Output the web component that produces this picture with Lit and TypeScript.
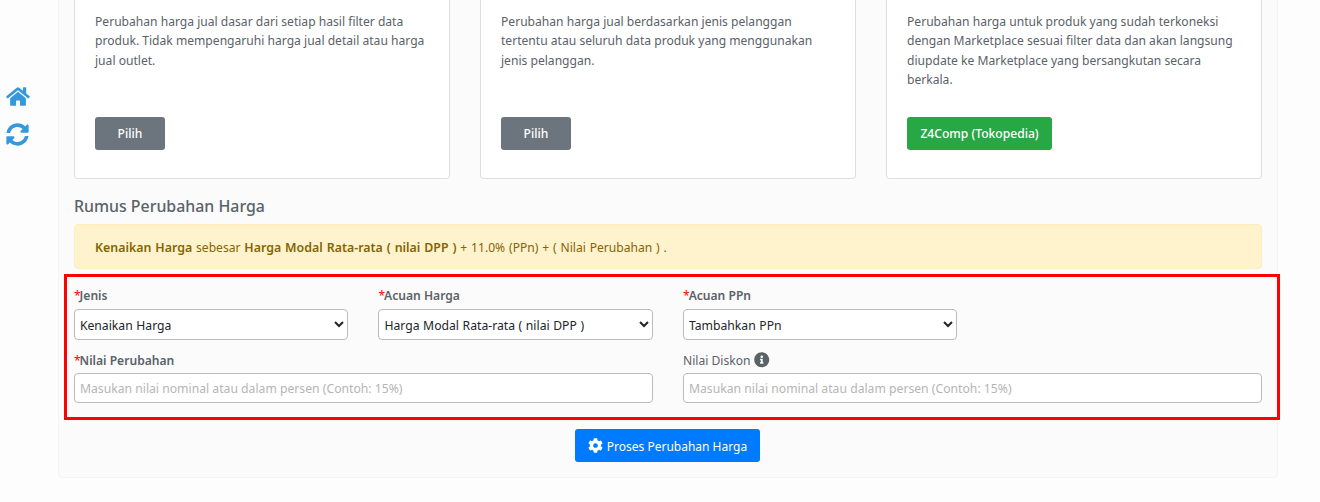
import { LitElement, html, css, svg } from "lit";
import { customElement } from "lit/decorators.js";

const HOME = "M280.37 148.26L96 300.11V464a16 16 0 0 0 16 16l112.06-.29a16 16 0 0 0 15.92-16V368a16 16 0 0 1 16-16h64a16 16 0 0 1 16 16v95.64a16 16 0 0 0 16 16.05L464 480a16 16 0 0 0 16-16V300L295.67 148.26a12.19 12.19 0 0 0-15.3 0zM571.6 251.47L488 182.56V44.05a12 12 0 0 0-12-12h-56a12 12 0 0 0-12 12v72.61L318.47 43a48 48 0 0 0-61 0L4.34 251.47a12 12 0 0 0-1.6 16.9l25.5 31A12 12 0 0 0 45.15 301l235.22-193.74a12.19 12.19 0 0 1 15.3 0L530.9 301a12 12 0 0 0 16.9-1.6l25.5-31a12 12 0 0 0-1.7-16.93z";
const SYNC = "M370.72 133.28C339.458 104.008 298.888 87.962 255.848 88c-77.458.068-144.328 53.178-162.791 126.85-1.344 5.363-6.122 9.15-11.651 9.15H24.103c-7.498 0-13.194-6.807-11.807-14.176C33.933 94.924 134.813 8 256 8c66.448 0 126.791 26.136 171.315 68.685L463.03 40.97C478.149 25.851 504 36.559 504 57.941V192c0 13.255-10.745 24-24 24H345.941c-21.382 0-32.09-25.851-16.971-40.971l41.75-41.749zM32 296h134.059c21.382 0 32.09 25.851 16.971 40.971l-41.75 41.75c31.262 29.273 71.835 45.319 114.876 45.28 77.418-.07 144.315-53.144 162.787-126.849 1.344-5.363 6.122-9.15 11.651-9.15h57.304c7.498 0 13.194 6.807 11.807 14.176C478.067 417.076 377.187 504 256 504c-66.448 0-126.791-26.136-171.315-68.685L48.97 471.03C33.851 486.149 8 475.441 8 454.059V320c0-13.255 10.745-24 24-24z";
const COG = "M487.4 315.7l-42.6-24.6c4.3-23.2 4.3-47 0-70.2l42.6-24.6c4.9-2.8 7.1-8.6 5.5-14-11.1-35.6-30-67.8-54.7-94.6-3.8-4.1-10-5.1-14.8-2.3L380.8 110c-17.9-15.4-38.5-27.3-60.8-35.1V25.8c0-5.6-3.9-10.5-9.4-11.7-36.7-8.2-74.3-7.8-109.2 0-5.5 1.2-9.4 6.1-9.4 11.7V75c-22.2 7.9-42.8 19.8-60.8 35.1L88.7 85.5c-4.9-2.8-11-1.9-14.8 2.3-24.7 26.7-43.6 58.9-54.7 94.6-1.7 5.4.6 11.2 5.5 14L67.3 221c-4.3 23.2-4.3 47 0 70.2l-42.6 24.6c-4.9 2.8-7.1 8.6-5.5 14 11.1 35.6 30 67.8 54.7 94.6 3.8 4.1 10 5.1 14.8 2.3l42.6-24.6c17.9 15.4 38.5 27.3 60.8 35.1v49.2c0 5.6 3.9 10.5 9.4 11.7 36.7 8.2 74.3 7.8 109.2 0 5.5-1.2 9.4-6.1 9.4-11.7v-49.2c22.2-7.9 42.8-19.8 60.8-35.1l42.6 24.6c4.9 2.8 11 1.9 14.8-2.3 24.7-26.7 43.6-58.9 54.7-94.6 1.5-5.5-.7-11.3-5.6-14.1zM256 336c-44.1 0-80-35.9-80-80s35.9-80 80-80 80 35.9 80 80-35.9 80-80 80z";
const INFO = "M256 8C119.043 8 8 119.083 8 256c0 136.997 111.043 248 248 248s248-111.003 248-248C504 119.083 392.957 8 256 8zm0 110c23.196 0 42 18.804 42 42s-18.804 42-42 42-42-18.804-42-42 18.804-42 42-42zm56 254c0 6.627-5.373 12-12 12h-88c-6.627 0-12-5.373-12-12v-24c0-6.627 5.373-12 12-12h12v-64h-12c-6.627 0-12-5.373-12-12v-24c0-6.627 5.373-12 12-12h64c6.627 0 12 5.373 12 12v100h12c6.627 0 12 5.373 12 12v24z";

const icon = (d: string, w: number, cls: string) =>
  html`<svg class=${cls} viewBox="0 0 ${w} 512" aria-hidden="true">${svg`<path fill="currentColor" d=${d}></path>`}</svg>`;

const PLACEHOLDER = "Masukan nilai nominal atau dalam persen (Contoh: 15%)";

@customElement("app-root")
export class AppRoot extends LitElement {
  static styles = css`
    :host {
      display: block;
      height: 502px;
      overflow: hidden;
      background: #fdfdfd;
      font-family: "Noto Sans", "Open Sans", sans-serif;
      font-size: 12.1px;
      line-height: 19.5px;
      color: #5a6268;
    }
    .page { display: flex; }
    .side {
      width: 58px;
      flex: none;
      box-sizing: border-box;
      padding: 86px 0 0 6px;
      display: flex;
      flex-direction: column;
      color: #3498db;
    }
    .side-home { width: 24px; height: 21px; }
    .side-sync { width: 23px; height: 23px; margin: 16px 0 0 0; }
    .panel {
      width: 1220px;
      height: 478px;
      box-sizing: border-box;
      padding: 0 15px;
      background: #fbfbfb;
      border: 1px solid #f4f4f4;
      border-top: 0;
      border-radius: 0 0 4px 4px;
    }
    .cards {
      display: grid;
      grid-template-columns: repeat(3, 1fr);
      gap: 30px;
      height: 179px;
    }
    .card {
      display: flex;
      flex-direction: column;
      align-items: flex-start;
      padding: 11.7px 20px 28px;
      background: #fff;
      border: 1px solid #dfdfdf;
      border-top: 0;
      border-radius: 0 0 4px 4px;
    }
    .card p { margin: 0; }
    .btn {
      margin-top: auto;
      height: 33px;
      padding: 0 12px;
      border: 0;
      border-radius: 3px;
      font: 500 12.1px/33px "Noto Sans", sans-serif;
      color: #fff;
    }
    .grey { background: #6c757d; width: 70px; }
    .green { background: #28a745; width: 145px; padding: 0; }
    h2 {
      margin: 17px 0 8px;
      font-size: 15.9px;
      line-height: 20px;
      font-weight: 500;
      color: #5a6268;
    }
    .alert {
      height: 45px;
      box-sizing: border-box;
      padding: 2px 20px 0;
      display: flex;
      align-items: center;
      white-space: pre;
      word-spacing: 0.7px;
      color: #856404;
      background: #fff3cd;
      border: 1px solid #ffeeba;
      border-radius: 4px;
    }
    .alert b { font-weight: 600; font-size: 12.4px; }
    .form {
      position: relative;
      display: grid;
      grid-template-columns: repeat(12, 1fr);
      column-gap: 30px;
      margin: 16px 0 0 -0.1px;
    }
    .mark {
      position: absolute;
      left: -10px;
      right: -18px;
      top: -11px;
      bottom: -17px;
      border: 3px solid #f00;
      pointer-events: none;
    }
    .field { display: flex; flex-direction: column; }
    .c3 { grid-column: span 3; }
    .c6 { grid-column: span 6; }
    .gap { grid-column: span 3; }
    label {
      display: flex;
      align-items: center;
      box-sizing: border-box;
      height: 20px;
      padding-top: 2px;
      margin-bottom: 4px;
      white-space: pre;
    }
    .c6 label { margin-bottom: 3px; }
    label.req { font-weight: 600; }
    label i { color: #f00; font-style: normal; font-weight: 400; letter-spacing: -1px; }
    .tip { width: 15.5px; height: 15.5px; margin: -2px 0 0 4px; color: #5a6268; }
    select, input {
      box-sizing: border-box;
      width: 100%;
      margin: 0;
      background-color: #fff;
      border: 1px solid #bbb;
      border-radius: 4px;
      font-family: "Noto Sans", sans-serif;
      font-size: 12.2px;
      color: #212529;
      outline: none;
    }
    select { height: 31px; padding: 1px 1px 0; margin-bottom: 10px; word-spacing: 0.4px; }
    input { height: 30px; padding: 0 5px; }
    input::placeholder { color: #b5b5b5; opacity: 1; }
    .action { display: flex; justify-content: center; margin: 26px 0 0 -1px; }
    .primary {
      display: flex;
      align-items: center;
      justify-content: center;
      gap: 4px;
      width: 185px;
      padding: 0;
      margin: 0;
      background: #007bff;
      font-weight: 400;
      font-size: 12px;
    }
    .label-text { padding-top: 2px; }
    .gear { width: 15px; height: 15px; }
  `;

  private cards = [
    { text: "Perubahan harga jual dasar dari setiap hasil filter data produk. Tidak mempengaruhi harga jual detail atau harga jual outlet.", label: "Pilih", cls: "grey" },
    { text: "Perubahan harga jual berdasarkan jenis pelanggan tertentu atau seluruh data produk yang menggunakan jenis pelanggan.", label: "Pilih", cls: "grey" },
    { text: "Perubahan harga untuk produk yang sudah terkoneksi dengan Marketplace sesuai filter data dan akan langsung diupdate ke Marketplace yang bersangkutan secara berkala.", label: "Z4Comp (Tokopedia)", cls: "green" },
  ];

  private selects = [
    { label: "Jenis", value: "Kenaikan Harga" },
    { label: "Acuan Harga", value: "Harga Modal Rata-rata ( nilai DPP )" },
    { label: "Acuan PPn", value: "Tambahkan PPn" },
  ];

  render() {
    return html`
      <div class="page">
        <nav class="side">
          ${icon(HOME, 576, "side-home")}
          ${icon(SYNC, 512, "side-sync")}
        </nav>
        <main class="panel">
          <section class="cards">
            ${this.cards.map(c => html`
              <article class="card">
                <p>${c.text}</p>
                <button class="btn ${c.cls}">${c.label}</button>
              </article>`)}
          </section>
          <h2>Rumus Perubahan Harga</h2>
          <div class="alert"><b>Kenaikan Harga</b> sebesar <b>Harga Modal Rata-rata ( nilai DPP )</b> + 11.0% (PPn) + ( Nilai Perubahan ) .</div>
          <section class="form">
            ${this.selects.map(s => html`
              <div class="field c3">
                <label class="req"><i>*</i>${s.label}</label>
                <select><option>${s.value}</option></select>
              </div>`)}
            <div class="gap"></div>
            <div class="field c6">
              <label class="req"><i>*</i>Nilai Perubahan</label>
              <input placeholder=${PLACEHOLDER} />
            </div>
            <div class="field c6">
              <label>Nilai Diskon${icon(INFO, 512, "tip")}</label>
              <input placeholder=${PLACEHOLDER} />
            </div>
            <div class="mark"></div>
          </section>
          <div class="action">
            <button class="btn primary">${icon(COG, 512, "gear")}<span class="label-text">Proses Perubahan Harga</span></button>
          </div>
        </main>
      </div>
    `;
  }
}
